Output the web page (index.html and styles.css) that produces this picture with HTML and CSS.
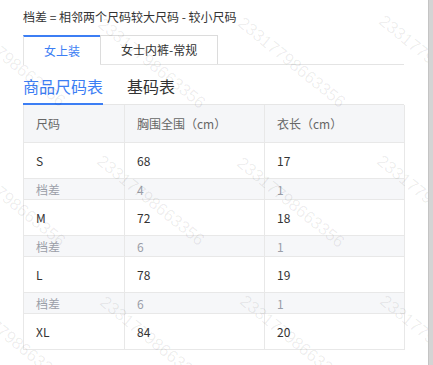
FILE: index.html
```html
<!DOCTYPE html>
<html lang="zh">
<head>
<meta charset="utf-8">
<title>尺码表</title>
<link rel="stylesheet" href="styles.css">
</head>
<body>
<div class="screen">
  <div class="page">
    <div class="title">档差 = 相邻两个尺码较大尺码 - 较小尺码</div>
    <div class="tabs">
      <div class="tab active">女上装</div>
      <div class="tab">女士内裤-常规</div>
    </div>
    <div class="subtabs">
      <div class="subtab active">商品尺码表</div>
      <div class="subtab">基码表</div>
    </div>
    <div class="table">
      <div class="row head"><div class="cell">尺码</div><div class="cell">胸围全围（cm）</div><div class="cell">衣长（cm）</div></div>
      <div class="row"><div class="cell">S</div><div class="cell">68</div><div class="cell">17</div></div>
      <div class="row diff"><div class="cell">档差</div><div class="cell">4</div><div class="cell">1</div></div>
      <div class="row"><div class="cell">M</div><div class="cell">72</div><div class="cell">18</div></div>
      <div class="row diff"><div class="cell">档差</div><div class="cell">6</div><div class="cell">1</div></div>
      <div class="row"><div class="cell">L</div><div class="cell">78</div><div class="cell">19</div></div>
      <div class="row diff"><div class="cell">档差</div><div class="cell">6</div><div class="cell">1</div></div>
      <div class="row"><div class="cell">XL</div><div class="cell">84</div><div class="cell">20</div></div>
    </div>
    <div class="watermarks">
      <span class="wm" style="left:-35px;top:14px">23317798663356</span>
      <span class="wm" style="left:105px;top:16px">23317798663356</span>
      <span class="wm" style="left:245px;top:15px">23317798663356</span>
      <span class="wm" style="left:386px;top:13px">23317798663356</span>
      <span class="wm" style="left:-35px;top:154px">23317798663356</span>
      <span class="wm" style="left:104px;top:153px">23317798663356</span>
      <span class="wm" style="left:244px;top:155px">23317798663356</span>
      <span class="wm" style="left:384px;top:153px">23317798663356</span>
      <span class="wm" style="left:-33px;top:293px">23317798663356</span>
      <span class="wm" style="left:107px;top:294px">23317798663356</span>
      <span class="wm" style="left:247px;top:293px">23317798663356</span>
      <span class="wm" style="left:387px;top:293px">23317798663356</span>
    </div>
  </div>
  <div class="edge"></div>
</div>
</body>
</html>
```

FILE: styles.css
```css
html, body {
  margin: 0;
  padding: 0;
  background: #ffffff;
}

body {
  font-family: "Noto Sans CJK SC", "Noto Sans", sans-serif;
  color: #333333;
  font-size: 12px;
}

.screen {
  display: flex;
  width: 433px;
  height: 365px;
  overflow: hidden;
}

.page {
  position: relative;
  flex: 1;
  padding: 7px 24px 0 23px;
  overflow: hidden;
}

.edge {
  width: 4px;
  background: #d4d4d4;
  border-left: 1px solid #c4c4c4;
}

.title {
  line-height: 20px;
  font-size: 12px;
  color: #333333;
  margin-bottom: 8px;
}

.tabs {
  display: flex;
  align-items: flex-start;
  height: 29px;
  border-bottom: 1px solid #e4e4e4;
}

.tab {
  box-sizing: border-box;
  height: 29px;
  padding: 0 20px;
  line-height: 27px;
  border: 1px solid #dcdcdc;
  border-bottom: none;
  color: #333333;
  background: #ffffff;
}

.tab.active {
  height: 30px;
  border-top: 2px solid #3c7ef4;
  border-left: 1px solid #e4e4e4;
  border-right: none;
  color: #3c7ef4;
  line-height: 27px;
}

.subtabs {
  display: flex;
  align-items: flex-start;
  gap: 24px;
  height: 39px;
  border-bottom: 1px solid #e6e6e6;
}

.subtab {
  box-sizing: border-box;
  height: 40px;
  padding-top: 10px;
  font-size: 16px;
  line-height: 22px;
  color: #333333;
}

.subtab.active {
  color: #3c7ef4;
  border-bottom: 2px solid #3c7ef4;
}

.table {
  width: 382px;
}

.row {
  display: grid;
  grid-template-columns: 101px 140px 141px;
  height: 36px;
  box-sizing: border-box;
  border-bottom: 1px solid #e8e8e8;
  background: #ffffff;
}

.row.head {
  height: 38px;
  background: #f5f6f8;
}

.row.diff {
  height: 21px;
  background: #f6f7f9;
}

.cell {
  box-sizing: border-box;
  border-left: 1px solid #e8e8e8;
  padding: 0 12px;
  display: flex;
  align-items: center;
  font-size: 12px;
  color: #333333;
  white-space: nowrap;
}

.cell:last-child {
  border-right: 1px solid #e8e8e8;
}

.head .cell {
  color: #666666;
}

.diff .cell {
  color: #9a9ea8;
}

.watermarks {
  position: absolute;
  inset: 0;
  pointer-events: none;
}

.wm {
  position: absolute;
  font-family: "Liberation Sans", sans-serif;
  font-size: 17px;
  line-height: 16px;
  color: rgba(0, 0, 0, 0.07);
  white-space: nowrap;
  transform: rotate(39deg);
  transform-origin: 0 0;
}
```
